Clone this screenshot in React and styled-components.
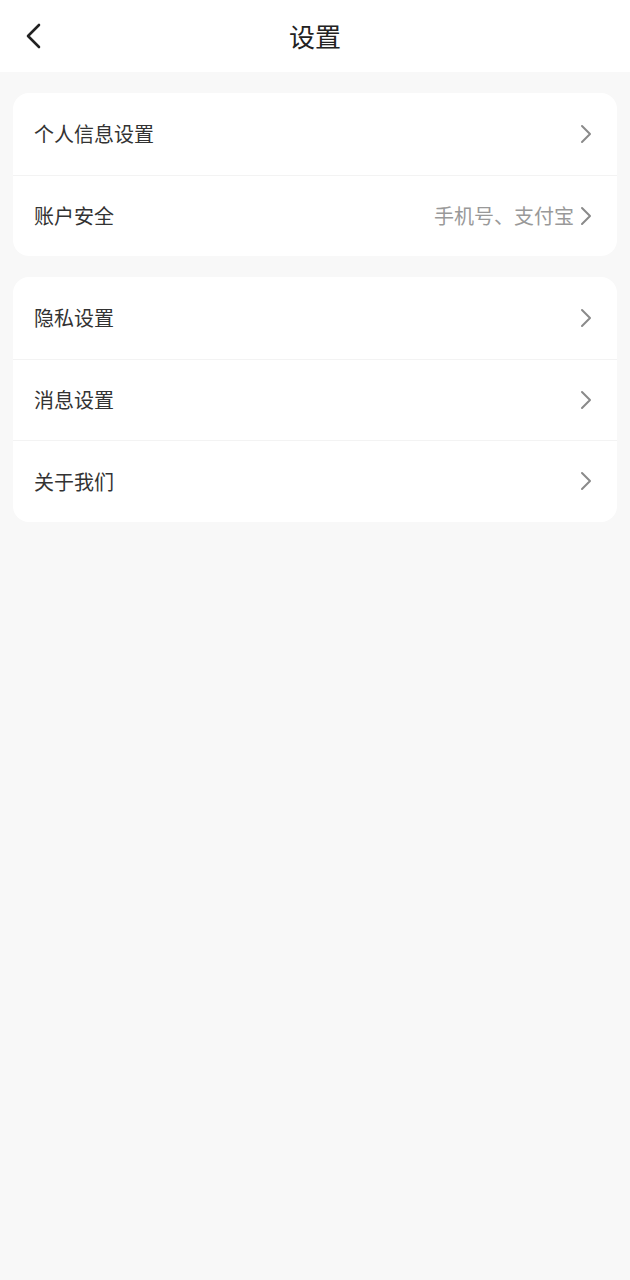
import styled, { createGlobalStyle } from "styled-components";

const GlobalStyle = createGlobalStyle`
  html, body {
    margin: 0;
    padding: 0;
    background: #f8f8f8;
  }
  body {
    font-family: "Noto Sans CJK SC", "Noto Sans", sans-serif;
    color: #333333;
  }
`;

const Page = styled.div`
  min-height: 1280px;
  background: #f8f8f8;
`;

const Header = styled.header`
  height: 72px;
  background: #ffffff;
  display: grid;
  grid-template-columns: 72px 1fr 72px;
  align-items: center;
`;

const BackButton = styled.button`
  border: none;
  background: none;
  padding: 0 0 0 23px;
  height: 72px;
  display: flex;
  align-items: center;
  color: #222222;
  cursor: pointer;
`;

const Title = styled.h1`
  margin: 0;
  text-align: center;
  font-size: 26px;
  font-weight: 400;
  color: #222222;
  line-height: 1;
`;

const Content = styled.main`
  padding: 21px 13px;
  display: flex;
  flex-direction: column;
  gap: 21px;
`;

const Card = styled.section`
  background: #ffffff;
  border-radius: 16px;
  overflow: hidden;
`;

const Row = styled.div`
  height: 81.5px;
  box-sizing: border-box;
  padding: 0 24px 0 21px;
  display: flex;
  align-items: center;
  justify-content: space-between;
  border-top: ${({ $first }) => ($first ? "none" : "1px solid #f3f3f3")};
  cursor: pointer;
`;

const Label = styled.span`
  font-size: 20px;
  color: #333333;
`;

const Right = styled.div`
  display: flex;
  align-items: center;
  gap: 5px;
`;

const Value = styled.span`
  font-size: 20px;
  color: #999999;
`;

const Chevron = () => (
  <svg width="14" height="20" viewBox="0 0 14 20" fill="none">
    <path
      d="M3 2l8 8-8 8"
      stroke="#8a8a8a"
      strokeWidth="2"
      strokeLinecap="round"
      strokeLinejoin="round"
    />
  </svg>
);

const BackIcon = () => (
  <svg width="20" height="26" viewBox="0 0 20 26" fill="none">
    <path
      d="M16 2L5 13l11 11"
      stroke="#222222"
      strokeWidth="2.6"
      strokeLinecap="round"
      strokeLinejoin="round"
    />
  </svg>
);

const groups = [
  [
    { label: "个人信息设置" },
    { label: "账户安全", value: "手机号、支付宝" },
  ],
  [{ label: "隐私设置" }, { label: "消息设置" }, { label: "关于我们" }],
];

export default function App() {
  return (
    <Page>
      <GlobalStyle />
      <Header>
        <BackButton aria-label="返回">
          <BackIcon />
        </BackButton>
        <Title>设置</Title>
        <span />
      </Header>
      <Content>
        {groups.map((items, gi) => (
          <Card key={gi}>
            {items.map((item, i) => (
              <Row key={item.label} $first={i === 0}>
                <Label>{item.label}</Label>
                <Right>
                  {item.value && <Value>{item.value}</Value>}
                  <Chevron />
                </Right>
              </Row>
            ))}
          </Card>
        ))}
      </Content>
    </Page>
  );
}
